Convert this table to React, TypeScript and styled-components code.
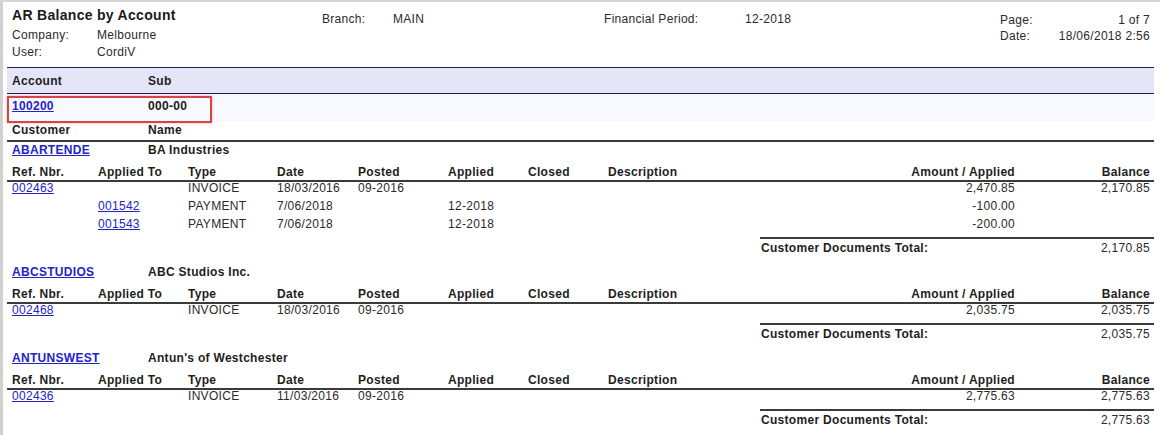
import styled, { createGlobalStyle } from "styled-components"

const GlobalStyle = createGlobalStyle`
  html, body {
    margin: 0;
    padding: 0;
    background: #ffffff;
  }
  body {
    font-family: "Liberation Sans", Arial, sans-serif;
    font-size: 12px;
    letter-spacing: 0.3px;
    color: #1e1e1e;
  }
`

type Doc = {
  ref?: string
  appliedTo?: string
  type: string
  date: string
  posted?: string
  applied?: string
  amount: string
  balance?: string
}

type Customer = {
  id: string
  name: string
  docs: Doc[]
  total: string
}

const customers: Customer[] = [
  {
    id: "ABARTENDE",
    name: "BA Industries",
    docs: [
      { ref: "002463", type: "INVOICE", date: "18/03/2016", posted: "09-2016", amount: "2,470.85", balance: "2,170.85" },
      { appliedTo: "001542", type: "PAYMENT", date: "7/06/2018", applied: "12-2018", amount: "-100.00" },
      { appliedTo: "001543", type: "PAYMENT", date: "7/06/2018", applied: "12-2018", amount: "-200.00" },
    ],
    total: "2,170.85",
  },
  {
    id: "ABCSTUDIOS",
    name: "ABC Studios Inc.",
    docs: [
      { ref: "002468", type: "INVOICE", date: "18/03/2016", posted: "09-2016", amount: "2,035.75", balance: "2,035.75" },
    ],
    total: "2,035.75",
  },
  {
    id: "ANTUNSWEST",
    name: "Antun's of Westchester",
    docs: [
      { ref: "002436", type: "INVOICE", date: "11/03/2016", posted: "09-2016", amount: "2,775.63", balance: "2,775.63" },
    ],
    total: "2,775.63",
  },
]

export default function App() {
  return (
    <>
      <GlobalStyle />
      <Page>
        <Report>
          <Header>
            <TitleBlock>
              <Title>AR Balance by Account</Title>
              <InfoLine>
                <Label $w={85}>Company:</Label>
                <span>Melbourne</span>
              </InfoLine>
              <InfoLine>
                <Label $w={85}>User:</Label>
                <span>CordiV</span>
              </InfoLine>
            </TitleBlock>
            <FieldBlock $w={282}>
              <InfoLine>
                <Label $w={71}>Branch:</Label>
                <span>MAIN</span>
              </InfoLine>
            </FieldBlock>
            <FieldBlock>
              <InfoLine>
                <Label $w={141}>Financial Period:</Label>
                <span>12-2018</span>
              </InfoLine>
            </FieldBlock>
            <PageBlock>
              <PageLine>
                <span>Page:</span>
                <span>1 of 7</span>
              </PageLine>
              <PageLine>
                <span>Date:</span>
                <span>18/06/2018 2:56</span>
              </PageLine>
            </PageBlock>
          </Header>

          <Band>
            <BandCell>Account</BandCell>
            <BandCell>Sub</BandCell>
          </Band>

          <AccountRow>
            <BandCell>
              <Link $bold>100200</Link>
            </BandCell>
            <BandCell>000-00</BandCell>
            <Highlight />
          </AccountRow>

          <CustomerHead>
            <NameCell>Customer</NameCell>
            <NameCell>Name</NameCell>
          </CustomerHead>

          {customers.map((c) => (
            <Group key={c.id}>
              <NameRow>
                <NameCell>
                  <Link $bold>{c.id}</Link>
                </NameCell>
                <NameCell>{c.name}</NameCell>
              </NameRow>
              <ColumnHead>
                <Cell>Ref. Nbr.</Cell>
                <Cell>Applied To</Cell>
                <Cell>Type</Cell>
                <Cell>Date</Cell>
                <Cell>Posted</Cell>
                <Cell>Applied</Cell>
                <Cell>Closed</Cell>
                <Cell>Description</Cell>
                <Cell $right>Amount / Applied</Cell>
                <Cell $right>Balance</Cell>
              </ColumnHead>
              {c.docs.map((d, i) => (
                <DocRow key={i}>
                  <Cell>{d.ref && <Link>{d.ref}</Link>}</Cell>
                  <Cell>{d.appliedTo && <Link>{d.appliedTo}</Link>}</Cell>
                  <Cell>{d.type}</Cell>
                  <Cell>{d.date}</Cell>
                  <Cell>{d.posted}</Cell>
                  <Cell>{d.applied}</Cell>
                  <Cell />
                  <Cell />
                  <Cell $right>{d.amount}</Cell>
                  <Cell $right>{d.balance}</Cell>
                </DocRow>
              ))}
              <TotalWrap>
                <TotalBox>
                  <TotalLabel>Customer Documents Total:</TotalLabel>
                  <Cell $right>{c.total}</Cell>
                </TotalBox>
              </TotalWrap>
            </Group>
          ))}
        </Report>
      </Page>
    </>
  )
}

const Page = styled.div`
  width: 1160px;
  height: 435px;
  box-sizing: border-box;
  border-top: 2px solid #d6d6d6;
  border-left: 3px solid #d0d0d0;
  padding-left: 4px;
  overflow: hidden;
`

const Report = styled.div`
  width: 1147px;
`

const Header = styled.div`
  display: flex;
  height: 65px;
`

const TitleBlock = styled.div`
  width: 310px;
  padding: 3px 0 0 5px;
`

const Title = styled.div`
  font-size: 14px;
  font-weight: bold;
  line-height: 20px;
  color: #1a1a1a;
  margin-bottom: 2px;
`

const InfoLine = styled.div`
  display: flex;
  line-height: 17px;
  color: #2a2a2a;
`

const Label = styled.span<{ $w: number }>`
  width: ${(p) => p.$w}px;
  flex-shrink: 0;
`

const FieldBlock = styled.div<{ $w?: number }>`
  ${(p) => (p.$w ? `width: ${p.$w}px;` : "flex: 1;")}
  padding-top: 9px;
`

const PageBlock = styled.div`
  width: 150px;
  padding: 10px 4px 0 0;
`

const PageLine = styled.div`
  display: flex;
  justify-content: space-between;
  line-height: 16px;
  color: #2a2a2a;
`

const Band = styled.div`
  display: grid;
  grid-template-columns: 136px 1fr;
  height: 25px;
  align-items: center;
  background: #e5e5f8;
  border-top: 1px solid #1f1a5c;
  border-bottom: 1px solid #1f1a5c;
  font-weight: bold;
`

const BandCell = styled.div`
  padding-left: 5px;
  font-weight: bold;
`

const AccountRow = styled.div`
  position: relative;
  display: grid;
  grid-template-columns: 136px 1fr;
  height: 23px;
  padding-top: 4px;
  line-height: 16px;
  background: #f8f8ff;
`

const Highlight = styled.div`
  position: absolute;
  left: 0;
  top: 2px;
  width: 201px;
  height: 23px;
  border: 2px solid #d64545;
  box-shadow: 0 0 3px rgba(220, 90, 90, 0.45);
  pointer-events: none;
`

const Link = styled.a<{ $bold?: boolean }>`
  color: #2323c8;
  text-decoration: underline;
  font-weight: ${(p) => (p.$bold ? "bold" : "normal")};
  cursor: pointer;
`

const CustomerHead = styled.div`
  display: grid;
  grid-template-columns: 136px 1fr;
  line-height: 19px;
  border-bottom: 2px solid #3a3a3a;
  font-weight: bold;
`

const NameCell = styled.div`
  padding-left: 5px;
  font-weight: bold;
`

const Group = styled.div`
  margin-bottom: 8px;
`

const NameRow = styled.div`
  display: grid;
  grid-template-columns: 136px 1fr;
  line-height: 16px;
`

const columns = "86px 90px 89px 81px 90px 80px 80px 1fr 200px 135px"

const ColumnHead = styled.div`
  display: grid;
  grid-template-columns: ${columns};
  padding-top: 6px;
  line-height: 16px;
  font-weight: bold;
  border-bottom: 2px solid #3a3a3a;
`

const DocRow = styled.div`
  display: grid;
  grid-template-columns: ${columns};
  line-height: 13px;
  padding-bottom: 5px;
  color: #2a2a2a;
`

const Cell = styled.div<{ $right?: boolean }>`
  padding: 0 4px 0 5px;
  text-align: ${(p) => (p.$right ? "right" : "left")};
  white-space: nowrap;
`

const TotalWrap = styled.div`
  display: flex;
  justify-content: flex-end;
  margin-top: 1px;
`

const TotalBox = styled.div`
  width: 394px;
  display: grid;
  grid-template-columns: 1fr 135px;
  border-top: 2px solid #3a3a3a;
  padding-top: 1px;
  line-height: 16px;
  color: #2a2a2a;
`

const TotalLabel = styled.div`
  font-weight: bold;
  padding-left: 1px;
  color: #1e1e1e;
`
